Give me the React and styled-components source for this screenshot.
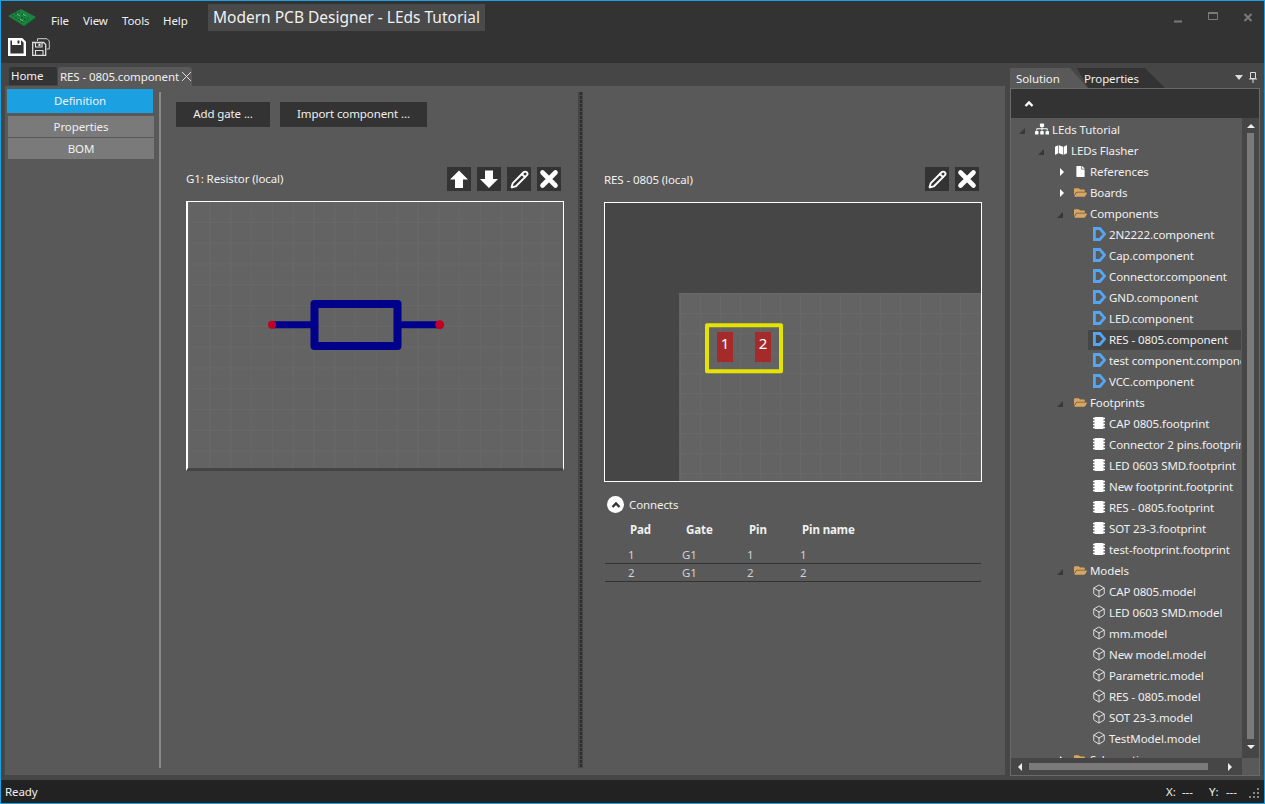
import React from 'react';
import styled, { createGlobalStyle } from 'styled-components';
import { Box, Pencil } from 'lucide-react';
import { FaSitemap, FaMap, FaFile, FaFolderOpen } from 'react-icons/fa';

const GlobalStyle = createGlobalStyle`
  html, body {
    margin: 0;
    padding: 0;
    background: #333;
  }
  * {
    box-sizing: border-box;
  }
`;

const Window = styled.div`
  width: 1265px;
  height: 804px;
  border: 1px solid #1ba1e2;
  display: flex;
  flex-direction: column;
  overflow: hidden;
  background: #333;
  color: #f0f0f0;
  font-family: 'Noto Sans', 'Open Sans', sans-serif;
  font-size: 11.5px;
  letter-spacing: -0.1px;
`;

/* ---- title bar ---- */
const TitleBar = styled.header`
  height: 62px;
  flex: none;
  background: #333;
`;

const TitleRow = styled.div`
  height: 36px;
  padding-top: 3px;
  display: flex;
  align-items: flex-start;
`;

const Logo = styled.svg`
  width: 28px;
  height: 18px;
  margin: 5px 15px 0 7px;
  flex: none;
`;

const Menu = styled.nav`
  display: grid;
  grid-template-columns: 32px 39px 41px 45px;
  margin-top: 8px;
  width: 157px;
`;

const MenuItem = styled.span`
  line-height: 17px;
`;

const AppTitle = styled.div`
  width: 277px;
  height: 27px;
  background: #4a4a4a;
  font-size: 15.5px;
  letter-spacing: 0;
  line-height: 27px;
  padding-left: 5px;
  white-space: nowrap;
`;

const WindowButtons = styled.div`
  margin-left: auto;
  display: grid;
  grid-template-columns: 35px 35px 22px;
  width: 92px;
`;

const WindowButton = styled.svg`
  width: 12px;
  height: 12px;
  margin-top: 7px;
`;

const ToolBar = styled.div`
  height: 26px;
  display: flex;
  gap: 6px;
  padding: 1px 0 0 7px;
`;

const ToolIcon = styled.svg`
  width: 18px;
  height: 18px;
`;

/* ---- workspace ---- */
const Workspace = styled.main`
  height: 717px;
  flex: none;
  display: flex;
  background: #464646;
`;

const DocArea = styled.section`
  width: 1004px;
  padding-left: 4px;
  flex: none;
`;

const DocTabs = styled.div`
  height: 23px;
  padding: 4px 0 0 4px;
  display: flex;
  gap: 1px;
`;

const DocTab = styled.div`
  height: ${(p) => (p.$active ? '19px' : '18px')};
  width: ${(p) => (p.$active ? '134px' : '48px')};
  padding-left: 2px;
  background: ${(p) => (p.$active ? '#595959' : '#333')};
  border-radius: 3px 3px 0 0;
  line-height: 18px;
  display: flex;
  align-items: center;
  white-space: nowrap;
`;

const TabClose = styled.svg`
  width: 11px;
  height: 11px;
  margin-left: 2px;
  flex: none;
`;

const DocPanel = styled.div`
  width: 1000px;
  height: 689px;
  background: #595959;
  display: flex;
  padding-top: 3px;
`;

const SideNav = styled.div`
  width: 149px;
  flex: none;
  padding-left: 2px;
  display: flex;
  flex-direction: column;
`;

const NavActive = styled.div`
  width: 146px;
  height: 24px;
  background: #1ba1e2;
  text-align: center;
  line-height: 24px;
  margin-bottom: 3px;
`;

const NavItem = styled.div`
  width: 146px;
  height: 21px;
  margin: 0 0 1px 1px;
  background: #7a7a7a;
  text-align: center;
  line-height: 21px;
`;

const PlainSplitter = styled.div`
  width: 2px;
  height: 676px;
  margin: 3px 0 0 5px;
  background: #8a8a8a;
  flex: none;
`;

const DottedSplitter = styled.div`
  width: 5px;
  height: 676px;
  margin-top: 3px;
  flex: none;
  background:
    repeating-linear-gradient(to bottom, #2c2c2c 0 3px, #4e4e4e 3px 4px) center / 2px 100% no-repeat,
    #454545;
`;

const LeftPane = styled.div`
  width: 417px;
  flex: none;
  padding: 13px 0 0 15px;
`;

const RightPane = styled.div`
  width: 422px;
  flex: none;
  padding: 78px 0 0 21px;
`;

const ActionRow = styled.div`
  display: flex;
  gap: 10px;
  height: 25px;
`;

const ActionButton = styled.div`
  width: ${(p) => p.$w}px;
  height: 25px;
  background: #333;
  text-align: center;
  line-height: 24px;
`;

const PaneHeader = styled.div`
  width: ${(p) => p.$w}px;
  height: 24px;
  display: flex;
  align-items: center;
  justify-content: space-between;
  padding-right: 3px;
`;

const LeftHeader = styled(PaneHeader)`
  margin: 40px 0 10px 10px;
`;

const RightHeader = styled(PaneHeader)`
  margin-bottom: 11px;
`;

const GateTitle = styled.span`
  margin-bottom: 2px;
`;

const HeaderIcons = styled.div`
  display: flex;
  gap: 6px;
`;

const IconButton = styled.div`
  width: 24px;
  height: 24px;
  background: #333;
  display: flex;
  align-items: center;
  justify-content: center;
  color: #fff;
`;

const ButtonGlyph = styled.svg`
  width: 20px;
  height: 20px;
`;

const FootprintCanvas = styled.div`
  width: 378px;
  height: 280px;
  border: 1px solid #fff;
  background: #636363;
  overflow: hidden;
`;

const GateCanvas = styled(FootprintCanvas)`
  height: 270px;
  margin-left: 10px;
  border-left-width: 2px;
  border-bottom: 3px solid #444;
`;

const CanvasDrawing = styled.svg`
  display: block;
  width: 100%;
  height: 100%;
`;

const ConnectsHeader = styled.div`
  margin: 14px 0 0 3px;
  height: 17px;
  display: flex;
  align-items: center;
  gap: 5px;
`;

const CollapseCircle = styled.div`
  width: 17px;
  height: 17px;
  border-radius: 50%;
  background: #fff;
  display: flex;
  align-items: center;
  justify-content: center;
`;

const Chevron = styled.svg`
  width: 10px;
  height: 8px;
`;

const ConnectsTable = styled.div`
  width: 376px;
  margin: 8px 0 0 1px;
`;

const TableHead = styled.div`
  height: 25px;
  padding-left: 25px;
  display: grid;
  grid-template-columns: 56px 63px 53px 1fr;
  font-weight: 700;
  line-height: 18px;
`;

const TableRow = styled.div`
  height: 18px;
  padding-left: 23px;
  display: grid;
  grid-template-columns: 54px 65px 53px 1fr;
  border-bottom: 1px solid #333;
  color: #d2d2d2;
  line-height: 18px;
`;

/* ---- right dock ---- */
const Dock = styled.aside`
  width: 250px;
  margin-left: 5px;
  padding-top: 5px;
  flex: none;
`;

const DockTabs = styled.div`
  height: 20px;
  display: flex;
  align-items: flex-start;
`;

const SolutionTab = styled.div`
  position: relative;
  z-index: 1;
  width: 78px;
  height: 20px;
  padding-left: 6px;
  background: #595959;
  line-height: 22px;
  clip-path: polygon(0 0, 60px 0, 78px 20px, 0 20px);
`;

const PropertiesTab = styled.div`
  width: 88px;
  height: 20px;
  margin-left: -11px;
  padding-left: 7px;
  background: #333;
  line-height: 22px;
  clip-path: polygon(0 0, 68px 0, 88px 20px, 11px 20px);
`;

const DockMenu = styled.div`
  margin: 4px 3px 0 auto;
  display: flex;
  align-items: center;
  gap: 6px;
`;

const DropTriangle = styled.div`
  width: 0;
  height: 0;
  border-left: 4px solid transparent;
  border-right: 4px solid transparent;
  border-top: 5px solid #ddd;
`;

const PinIcon = styled.svg`
  width: 8px;
  height: 11px;
`;

const DockBody = styled.div`
  width: 250px;
  height: 688px;
  border: 1px solid #6a6a6a;
  display: flex;
  flex-direction: column;
`;

const DockToolbar = styled.div`
  height: 29px;
  flex: none;
  background: #333;
  padding-left: 13px;
  display: flex;
  align-items: center;
`;

const TreeArea = styled.div`
  height: 640px;
  flex: none;
  display: flex;
`;

const Tree = styled.div`
  width: 231px;
  flex: none;
  padding-top: 1px;
  background: #595959;
  overflow: hidden;
`;

const TreeRow = styled.div`
  height: 21px;
  padding-left: ${(p) => 7 + p.$level * 19}px;
  display: flex;
  align-items: center;
  white-space: nowrap;
`;

const Expander = styled.div`
  width: 13px;
  flex: none;
  display: flex;
  justify-content: flex-start;
  padding-left: ${(p) => (p.$open ? 1 : 4)}px;
`;

const OpenMark = styled.div`
  width: 0;
  height: 0;
  margin-top: 2px;
  border-left: 6px solid transparent;
  border-bottom: 6px solid #383838;
`;

const ClosedMark = styled.div`
  width: 0;
  height: 0;
  border-top: 4px solid transparent;
  border-bottom: 4px solid transparent;
  border-left: 4px solid #fff;
`;

const TreeItem = styled.div`
  flex: 1;
  min-width: 0;
  height: 20px;
  margin-right: 1px;
  padding: 0 0 1px 4px;
  display: flex;
  align-items: center;
  background: ${(p) => (p.$selected ? '#464646' : 'transparent')};
  overflow: hidden;
`;

const TreeIcon = styled.span`
  width: 14px;
  height: 14px;
  margin-right: 3px;
  flex: none;
  display: flex;
  align-items: center;
  justify-content: center;
  color: ${(p) => p.$color || '#fff'};
`;

const ScrollTrackV = styled.div`
  width: 17px;
  flex: none;
  background: #464646;
  display: flex;
  flex-direction: column;
  align-items: center;
`;

const ThumbV = styled.div`
  width: 7px;
  height: 606px;
  margin: 5px 0 4px;
  background: #7a7a7a;
`;

const ArrowUp = styled.div`
  width: 0;
  height: 0;
  margin-top: 6px;
  border-left: 4px solid transparent;
  border-right: 4px solid transparent;
  border-bottom: 4px solid #eee;
`;

const ArrowDown = styled.div`
  width: 0;
  height: 0;
  margin-top: 2px;
  border-left: 4px solid transparent;
  border-right: 4px solid transparent;
  border-top: 4px solid #eee;
`;

const HScrollRow = styled.div`
  height: 17px;
  flex: none;
  display: flex;
`;

const ScrollTrackH = styled.div`
  width: 231px;
  background: #464646;
  display: flex;
  align-items: center;
  padding-left: 7px;
`;

const ArrowLeft = styled.div`
  width: 0;
  height: 0;
  border-top: 4px solid transparent;
  border-bottom: 4px solid transparent;
  border-right: 4px solid #eee;
`;

const ArrowRight = styled.div`
  width: 0;
  height: 0;
  margin-left: 20px;
  border-top: 4px solid transparent;
  border-bottom: 4px solid transparent;
  border-left: 4px solid #eee;
`;

const ThumbH = styled.div`
  width: 179px;
  height: 7px;
  margin-left: 7px;
  background: #7a7a7a;
`;

const ScrollCorner = styled.div`
  flex: 1;
  background: #595959;
`;

/* ---- status bar ---- */
const StatusBar = styled.footer`
  height: 23px;
  flex: none;
  background: #222;
  padding-left: 4px;
  display: flex;
  align-items: center;
  line-height: 23px;
`;

const Coordinates = styled.div`
  margin-left: auto;
  display: grid;
  grid-template-columns: 16px 27px 17px 23px;
  width: 83px;
`;

const Grip = styled.svg`
  width: 10px;
  height: 10px;
  margin: 3px 5px 0 0;
`;

const ComponentIcon = () => (
  <svg width="13" height="14" viewBox="0 0 13 14">
    <path d="M1.400 1.500h5.400l4.800 5.500-4.800 5.500H1.400z" fill="none" stroke="#55a5f0" strokeWidth="2.800" />
  </svg>
);

const FootprintIcon = () => (
  <svg width="14" height="14" viewBox="0 0 14 14">
    <rect x="2.500" y="1" width="9" height="12" rx="1" fill="#fff" />
    <path d="M1 2.500h12M1 5.500h12M1 8.500h12M1 11.500h12" stroke="#fff" strokeWidth="1.600" />
  </svg>
);

const ModelIcon = () => <Box size={14} strokeWidth={1.4} />;

const iconFor = {
  sitemap: <FaSitemap size={14} />,
  map: <FaMap size={12} />,
  file: <FaFile size={11} />,
  folder: <FaFolderOpen size={13} />,
  component: <ComponentIcon />,
  footprint: <FootprintIcon />,
  model: <ModelIcon />,
};

const treeRows = [
  { level: 0, mark: 'open', icon: 'sitemap', label: 'LEds Tutorial' },
  { level: 1, mark: 'open', icon: 'map', label: 'LEDs Flasher' },
  { level: 2, mark: 'closed', icon: 'file', label: 'References' },
  { level: 2, mark: 'closed', icon: 'folder', label: 'Boards' },
  { level: 2, mark: 'open', icon: 'folder', label: 'Components' },
  { level: 3, icon: 'component', label: '2N2222.component' },
  { level: 3, icon: 'component', label: 'Cap.component' },
  { level: 3, icon: 'component', label: 'Connector.component' },
  { level: 3, icon: 'component', label: 'GND.component' },
  { level: 3, icon: 'component', label: 'LED.component' },
  { level: 3, icon: 'component', label: 'RES - 0805.component', selected: true },
  { level: 3, icon: 'component', label: 'test component.component' },
  { level: 3, icon: 'component', label: 'VCC.component' },
  { level: 2, mark: 'open', icon: 'folder', label: 'Footprints' },
  { level: 3, icon: 'footprint', label: 'CAP 0805.footprint' },
  { level: 3, icon: 'footprint', label: 'Connector 2 pins.footprint' },
  { level: 3, icon: 'footprint', label: 'LED 0603 SMD.footprint' },
  { level: 3, icon: 'footprint', label: 'New footprint.footprint' },
  { level: 3, icon: 'footprint', label: 'RES - 0805.footprint' },
  { level: 3, icon: 'footprint', label: 'SOT 23-3.footprint' },
  { level: 3, icon: 'footprint', label: 'test-footprint.footprint' },
  { level: 2, mark: 'open', icon: 'folder', label: 'Models' },
  { level: 3, icon: 'model', label: 'CAP 0805.model' },
  { level: 3, icon: 'model', label: 'LED 0603 SMD.model' },
  { level: 3, icon: 'model', label: 'mm.model' },
  { level: 3, icon: 'model', label: 'New model.model' },
  { level: 3, icon: 'model', label: 'Parametric.model' },
  { level: 3, icon: 'model', label: 'RES - 0805.model' },
  { level: 3, icon: 'model', label: 'SOT 23-3.model' },
  { level: 3, icon: 'model', label: 'TestModel.model' },
  { level: 2, mark: 'closed', icon: 'folder', label: 'Schematics' },
];

const connects = [
  ['1', 'G1', '1', '1'],
  ['2', 'G1', '2', '2'],
];

const UpGlyph = () => (
  <ButtonGlyph viewBox="0 0 20 20">
    <path d="M10 1.500 19 10.500h-5V19H6v-8.500H1z" fill="#fff" />
  </ButtonGlyph>
);

const DownGlyph = () => (
  <ButtonGlyph viewBox="0 0 20 20">
    <path d="M10 19 19 10h-5V1.500H6V10H1z" fill="#fff" />
  </ButtonGlyph>
);

const CrossGlyph = () => (
  <ButtonGlyph viewBox="0 0 20 20">
    <path d="M3.500 3.500l13 13M16.500 3.500l-13 13" stroke="#fff" strokeWidth="4.600" strokeLinecap="round" />
  </ButtonGlyph>
);

const PencilGlyph = () => <Pencil size={19} strokeWidth={2.4} />;

const ChevronUp = ({ color }) => (
  <Chevron viewBox="0 0 10 8">
    <path d="M1.500 6 5 2.500 8.500 6" fill="none" stroke={color} strokeWidth="2.400" />
  </Chevron>
);

const Floppy = () => (
  <ToolIcon viewBox="0 0 18 18">
    <path d="M1.200 1.200h12.600l3 3v12.600H1.200z" fill="none" stroke="#fff" strokeWidth="2.400" />
    <path d="M4 1v6h9V1z" fill="#fff" />
    <path d="M9.500 2.500h2v3h-2z" fill="#333" />
  </ToolIcon>
);

const FloppyAll = () => (
  <ToolIcon viewBox="0 0 18 18">
    <path d="M5.500 3V.7H15l2.300 2.300v8h-2.500" fill="none" stroke="#ccc" strokeWidth="1" />
    <path d="M.7 4.500h11l2 2v11H.7z" fill="none" stroke="#ddd" strokeWidth="1.300" />
    <path d="M3.500 4.500v4.500h6.500V4.500M3.500 17.500v-5h7.500v5" fill="none" stroke="#ddd" strokeWidth="1.100" />
    <path d="M6.500 5.500h2v2.500h-2z" fill="#ddd" />
  </ToolIcon>
);

const PcbLogo = () => (
  <Logo viewBox="0 0 28 18">
    <path d="M0 7 13 0 28 8 16 17z" fill="#1c8440" />
    <path d="M4 7l9-5M7 9l9-5M10 11l9-5M13 13l9-5M7 4l13 8M4 6.500l12 7.500" stroke="#0c5a2a" strokeWidth="1" strokeDasharray="2 1.500" fill="none" />
    <path d="M9 5l3 2M15 5l3 2M12 10l3 2" stroke="#5cc47c" strokeWidth="1" fill="none" />
    <path d="M16 17l12-9v1.500L16.500 18z" fill="#0f5a2b" />
  </Logo>
);

const GateDrawing = () => (
  <CanvasDrawing viewBox="1 0 375 266">
    <defs>
      <pattern id="gateGrid" x="1.500" y="-1" width="20.800" height="20.800" patternUnits="userSpaceOnUse">
        <path d="M.5 0v20.800M0 .5h20.800" stroke="#686868" strokeWidth="1" fill="none" />
      </pattern>
    </defs>
    <rect x="1" width="375" height="266" fill="url(#gateGrid)" />
    <path d="M85 122.700H128M210 122.700H252" stroke="#00008b" strokeWidth="7" />
    <rect x="127.500" y="102" width="83" height="42" fill="none" stroke="#00008b" strokeWidth="8" strokeLinejoin="round" />
    <circle cx="85" cy="122.700" r="4" fill="#c00025" />
    <circle cx="252.700" cy="122.700" r="4.500" fill="#c00025" />
  </CanvasDrawing>
);

const FootprintDrawing = () => (
  <CanvasDrawing viewBox="0 0 376 278">
    <defs>
      <pattern id="boardGrid" x="75" y="90" width="20" height="20" patternUnits="userSpaceOnUse">
        <path d="M.5 0v20M0 .5h20" stroke="#686868" strokeWidth="1" fill="none" />
      </pattern>
    </defs>
    <rect width="376" height="278" fill="#464646" />
    <rect x="74" y="90" width="302" height="188" fill="#636363" />
    <rect x="74" y="90" width="302" height="188" fill="url(#boardGrid)" />
    <rect x="102" y="122.300" width="74" height="46" fill="none" stroke="#e4e400" strokeWidth="4" strokeLinejoin="round" />
    <rect x="112" y="129" width="16" height="30" fill="#a52a2a" />
    <rect x="150" y="129" width="16" height="30" fill="#a52a2a" />
    <text x="120" y="146" textAnchor="middle" fill="#fff" fontSize="15" fontFamily="Noto Sans, sans-serif">1</text>
    <text x="158" y="146" textAnchor="middle" fill="#fff" fontSize="15" fontFamily="Noto Sans, sans-serif">2</text>
  </CanvasDrawing>
);

export default function App() {
  return (
    <>
      <GlobalStyle />
      <Window>
        <TitleBar>
          <TitleRow>
            <PcbLogo />
            <Menu>
              <MenuItem>File</MenuItem>
              <MenuItem>View</MenuItem>
              <MenuItem>Tools</MenuItem>
              <MenuItem>Help</MenuItem>
            </Menu>
            <AppTitle>Modern PCB Designer - LEds Tutorial</AppTitle>
            <WindowButtons>
              <WindowButton viewBox="0 0 12 12">
                <path d="M2 10.500h8" stroke="#7a7a7a" strokeWidth="2" />
              </WindowButton>
              <WindowButton viewBox="0 0 12 12">
                <path d="M1.500 1.500h9v7h-9z" fill="none" stroke="#7a7a7a" strokeWidth="1" />
                <path d="M1.500 2h9" stroke="#7a7a7a" strokeWidth="2" />
              </WindowButton>
              <WindowButton viewBox="0 0 12 12">
                <path d="M2.500 3l7 7M9.500 3l-7 7" stroke="#7a7a7a" strokeWidth="2" />
              </WindowButton>
            </WindowButtons>
          </TitleRow>
          <ToolBar>
            <Floppy />
            <FloppyAll />
          </ToolBar>
        </TitleBar>

        <Workspace>
          <DocArea>
            <DocTabs>
              <DocTab>Home</DocTab>
              <DocTab $active>
                RES - 0805.component
                <TabClose viewBox="0 0 11 11">
                  <path d="M1 1l9 9M10 1l-9 9" stroke="#ddd" strokeWidth="1" />
                </TabClose>
              </DocTab>
            </DocTabs>
            <DocPanel>
              <SideNav>
                <NavActive>Definition</NavActive>
                <NavItem>Properties</NavItem>
                <NavItem>BOM</NavItem>
              </SideNav>
              <PlainSplitter />
              <LeftPane>
                <ActionRow>
                  <ActionButton $w={94}>Add gate ...</ActionButton>
                  <ActionButton $w={147}>Import component ...</ActionButton>
                </ActionRow>
                <LeftHeader $w={378}>
                  <GateTitle>G1: Resistor (local)</GateTitle>
                  <HeaderIcons>
                    <IconButton><UpGlyph /></IconButton>
                    <IconButton><DownGlyph /></IconButton>
                    <IconButton><PencilGlyph /></IconButton>
                    <IconButton><CrossGlyph /></IconButton>
                  </HeaderIcons>
                </LeftHeader>
                <GateCanvas>
                  <GateDrawing />
                </GateCanvas>
              </LeftPane>
              <DottedSplitter />
              <RightPane>
                <RightHeader $w={378}>
                  <span>RES - 0805 (local)</span>
                  <HeaderIcons>
                    <IconButton><PencilGlyph /></IconButton>
                    <IconButton><CrossGlyph /></IconButton>
                  </HeaderIcons>
                </RightHeader>
                <FootprintCanvas>
                  <FootprintDrawing />
                </FootprintCanvas>
                <ConnectsHeader>
                  <CollapseCircle><ChevronUp color="#333" /></CollapseCircle>
                  <span>Connects</span>
                </ConnectsHeader>
                <ConnectsTable>
                  <TableHead>
                    <span>Pad</span>
                    <span>Gate</span>
                    <span>Pin</span>
                    <span>Pin name</span>
                  </TableHead>
                  {connects.map((row) => (
                    <TableRow key={row[0]}>
                      {row.map((cell, i) => (
                        <span key={i}>{cell}</span>
                      ))}
                    </TableRow>
                  ))}
                </ConnectsTable>
              </RightPane>
            </DocPanel>
          </DocArea>

          <Dock>
            <DockTabs>
              <SolutionTab>Solution</SolutionTab>
              <PropertiesTab>Properties</PropertiesTab>
              <DockMenu>
                <DropTriangle />
                <PinIcon viewBox="0 0 8 11">
                  <path d="M1.500 .5h5v6h-5zM0 7h8M4 7v4" fill="none" stroke="#ddd" strokeWidth="1" />
                </PinIcon>
              </DockMenu>
            </DockTabs>
            <DockBody>
              <DockToolbar>
                <ChevronUp color="#fff" />
              </DockToolbar>
              <TreeArea>
                <Tree>
                  {treeRows.map((row) => (
                    <TreeRow key={row.label} $level={row.level}>
                      <Expander $open={row.mark === 'open'}>
                        {row.mark === 'open' && <OpenMark />}
                        {row.mark === 'closed' && <ClosedMark />}
                      </Expander>
                      <TreeItem $selected={row.selected}>
                        <TreeIcon $color={row.icon === 'folder' ? '#d9a662' : undefined}>
                          {iconFor[row.icon]}
                        </TreeIcon>
                        {row.label}
                      </TreeItem>
                    </TreeRow>
                  ))}
                </Tree>
                <ScrollTrackV>
                  <ArrowUp />
                  <ThumbV />
                  <ArrowDown />
                </ScrollTrackV>
              </TreeArea>
              <HScrollRow>
                <ScrollTrackH>
                  <ArrowLeft />
                  <ThumbH />
                  <ArrowRight />
                </ScrollTrackH>
                <ScrollCorner />
              </HScrollRow>
            </DockBody>
          </Dock>
        </Workspace>

        <StatusBar>
          Ready
          <Coordinates>
            <span>X:</span>
            <span>---</span>
            <span>Y:</span>
            <span>---</span>
          </Coordinates>
          <Grip viewBox="0 0 10 10">
            <path d="M8 0h2v2H8zM4 4h2v2H4zM8 4h2v2H8zM0 8h2v2H0zM4 8h2v2H4zM8 8h2v2H8z" fill="#888" />
          </Grip>
        </StatusBar>
      </Window>
    </>
  );
}
